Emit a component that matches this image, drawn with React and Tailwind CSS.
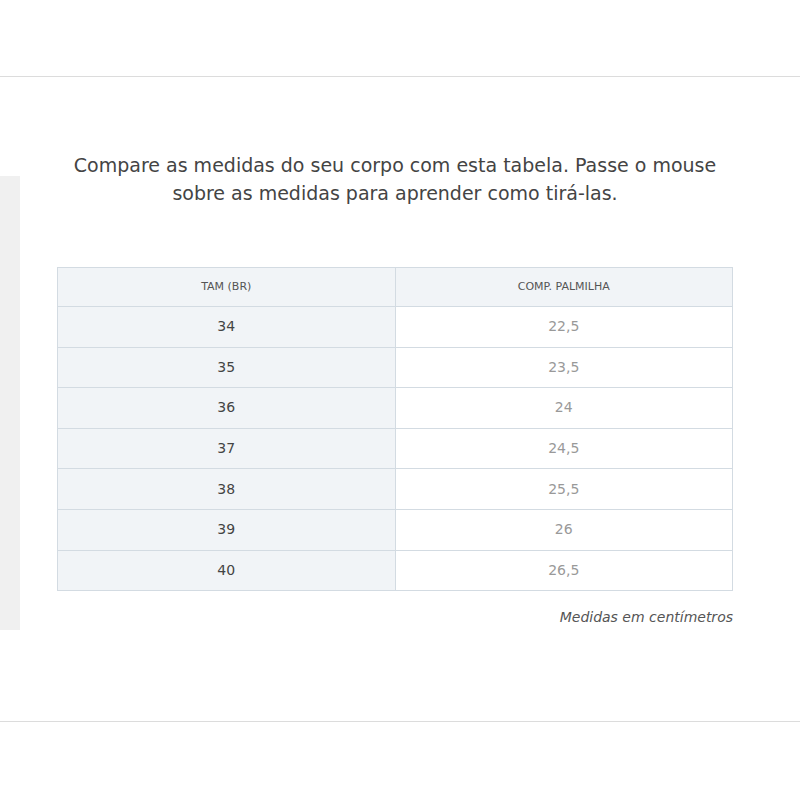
import React from "react";

const rows = [
  ["34", "22,5"],
  ["35", "23,5"],
  ["36", "24"],
  ["37", "24,5"],
  ["38", "25,5"],
  ["39", "26"],
  ["40", "26,5"],
];

export default function App() {
  return (
    <div className="min-h-[800px] bg-white font-['DejaVu_Sans',sans-serif]">
      {/* faixa superior */}
      <div className="h-[77px] border-b border-[#dcdcdc]" />

      <div className="flex h-[645px] border-b border-[#dcdcdc]">
        {/* painel lateral cortado */}
        <div className="mt-[99px] h-[454px] w-[20px] bg-[#f0f0f0]" />

        <div className="ml-[37px] w-[676px] pt-[74px]">
          <p className="text-center text-[19px] leading-[28px] text-[#444]">
            Compare as medidas do seu corpo com esta tabela. Passe o mouse
            <br />
            sobre as medidas para aprender como tirá-las.
          </p>

          <table className="mt-[60px] w-full border-collapse border border-[#d3dbe2] text-center">
            <thead>
              <tr className="h-[39px] bg-[#f1f4f7]">
                <th className="w-1/2 border border-[#d3dbe2] text-[11px] font-normal text-[#555]">
                  TAM (BR)
                </th>
                <th className="w-1/2 border border-[#d3dbe2] text-[11px] font-normal text-[#555]">
                  COMP. PALMILHA
                </th>
              </tr>
            </thead>
            <tbody>
              {rows.map(([tam, comp]) => (
                <tr key={tam} className="h-[40.6px]">
                  <td className="border border-[#d3dbe2] bg-[#f1f4f7] text-[14px] text-[#444]">
                    {tam}
                  </td>
                  <td className="border border-[#d3dbe2] bg-white text-[14px] text-[#999]">
                    {comp}
                  </td>
                </tr>
              ))}
            </tbody>
          </table>

          <p className="mt-[16px] text-right text-[14px] italic text-[#555]">
            Medidas em centímetros
          </p>
        </div>
      </div>
    </div>
  );
}
